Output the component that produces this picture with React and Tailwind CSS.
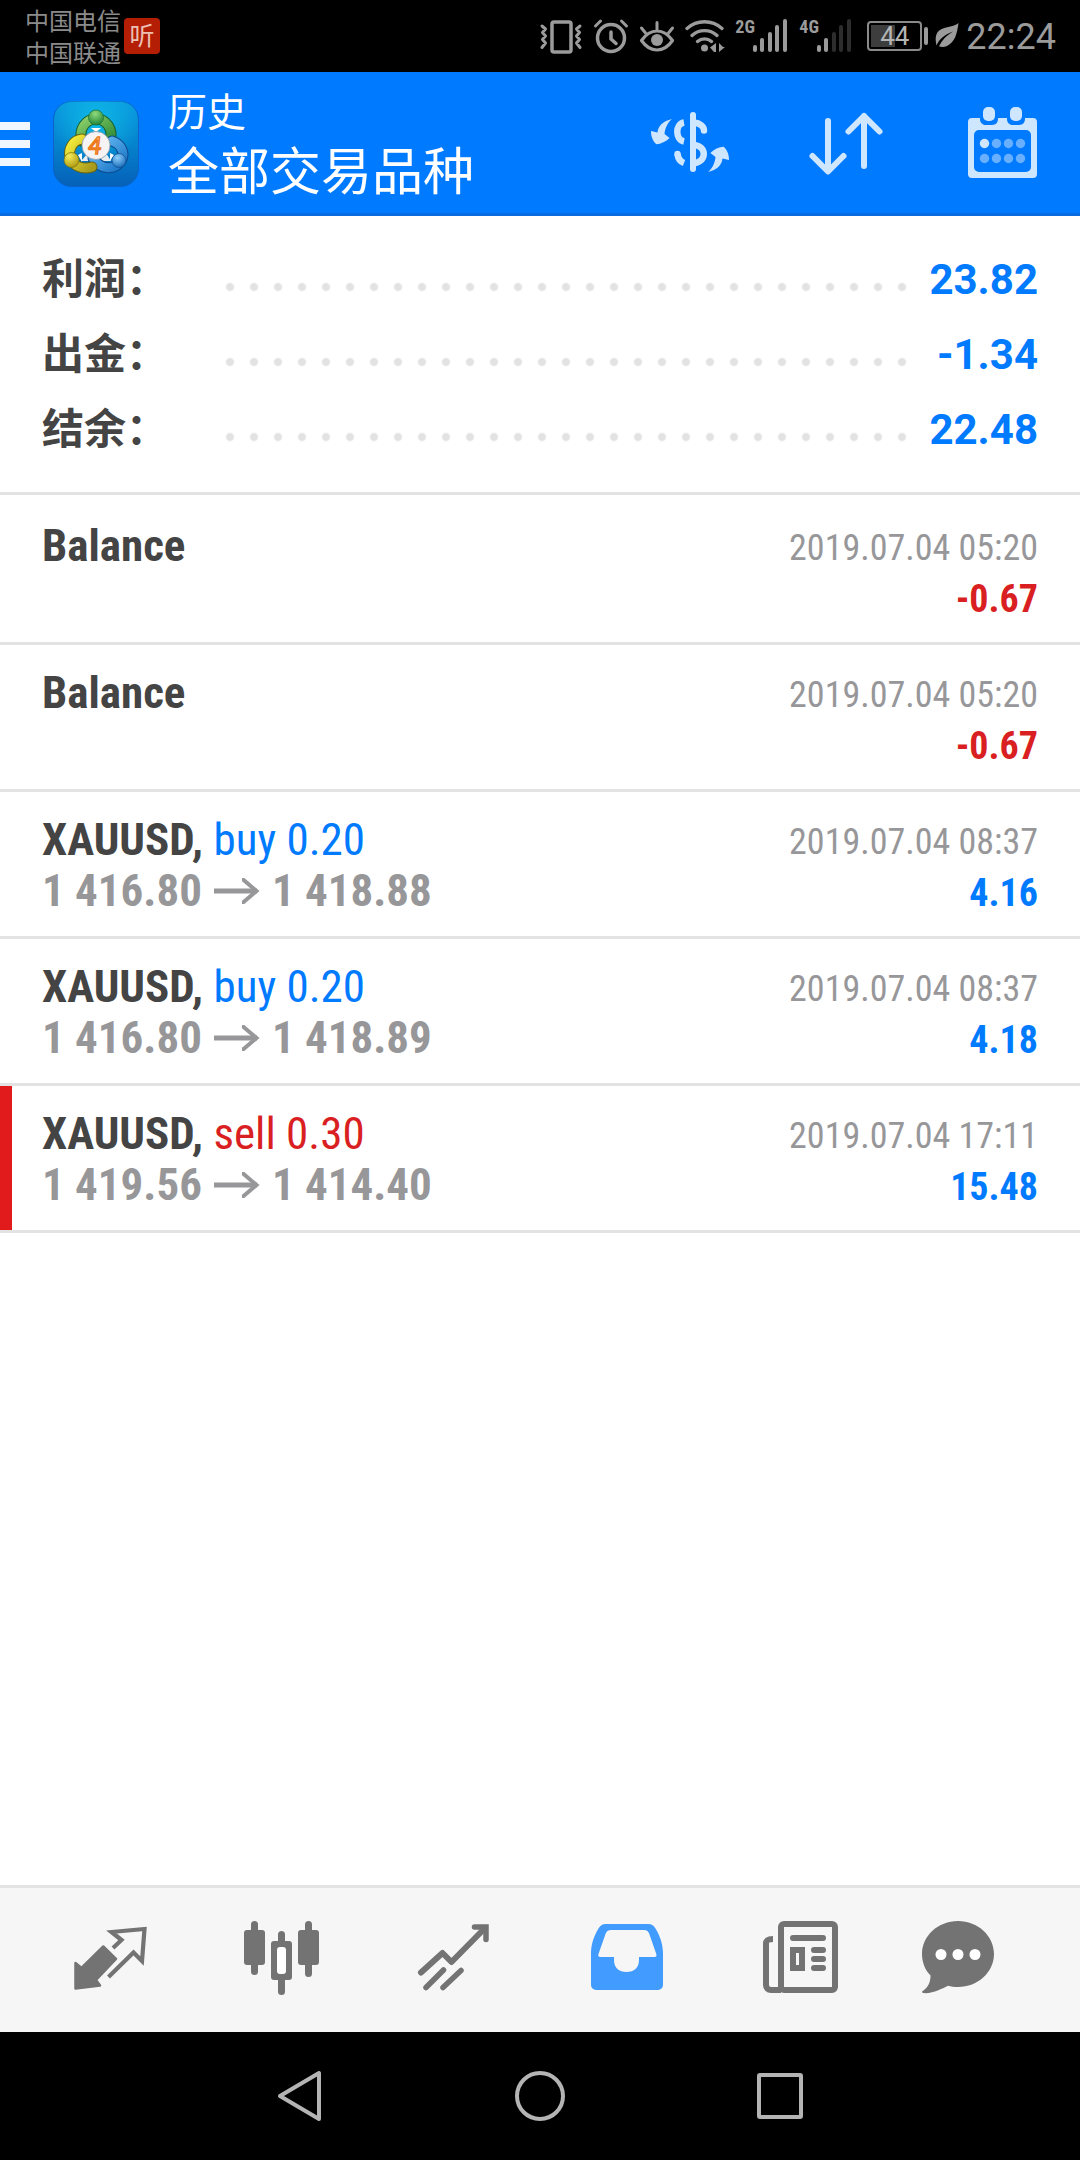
import React, { useState } from 'react'
import clsx from 'clsx'

const summary = [
  { label: '利润', value: '23.82' },
  { label: '出金', value: '-1.34' },
  { label: '结余', value: '22.48' },
]

const deals = [
  { id: 1, name: 'Balance', time: '2019.07.04 05:20', profit: '-0.67' },
  { id: 2, name: 'Balance', time: '2019.07.04 05:20', profit: '-0.67' },
  { id: 3, name: 'XAUUSD', side: 'buy', volume: '0.20', open: '1 416.80', close: '1 418.88', time: '2019.07.04 08:37', profit: '4.16' },
  { id: 4, name: 'XAUUSD', side: 'buy', volume: '0.20', open: '1 416.80', close: '1 418.89', time: '2019.07.04 08:37', profit: '4.18' },
  { id: 5, name: 'XAUUSD', side: 'sell', volume: '0.30', open: '1 419.56', close: '1 414.40', time: '2019.07.04 17:11', profit: '15.48', marked: true },
]

/* ---------- status bar ---------- */

const VibrateIcon = () => (
  <svg width="44" height="36" viewBox="0 0 44 36" fill="none" stroke="currentColor" strokeLinejoin="round" strokeLinecap="round">
    <rect x="13" y="4" width="19" height="30" rx="2" strokeWidth="3.5" />
    <path d="M3 8l3.500 3-3 3.500 3 3.500-3 3.500 3 3.500-3.500 4.500M41 8l-3.500 3 3 3.500-3 3.500 3 3.500-3 3.500 3.500 4.500" strokeWidth="3" />
  </svg>
)

const AlarmIcon = () => (
  <svg width="36" height="36" viewBox="0 0 36 36" fill="none" stroke="currentColor" strokeLinecap="round">
    <circle cx="18" cy="20" r="13.500" strokeWidth="3.500" />
    <path d="M18 14v7l5 4.500" strokeWidth="3.500" />
    <path d="M2.500 8l5-5M33.500 8l-5-5" strokeWidth="3" />
  </svg>
)

const EyeIcon = () => (
  <svg width="36" height="36" viewBox="0 0 36 36" fill="none" stroke="currentColor" strokeLinecap="round">
    <path d="M2.500 22.500C7 16 12 13 18 13s11 3 15.500 9.500C29 29 24 32 18 32S7 29 2.500 22.500z" strokeWidth="3.200" strokeLinejoin="round" />
    <circle cx="18" cy="22" r="6" fill="currentColor" stroke="none" />
    <path d="M18 4.500V11M2.500 10l4 5M33.500 10l-4 5" strokeWidth="3" />
  </svg>
)

const WifiIcon = () => (
  <svg width="40" height="36" viewBox="0 0 40 36" fill="none" stroke="currentColor" strokeLinecap="round">
    <path d="M2 10.500C12 1.500 27 1.500 37 10.500M7 17.500c7-6.500 18-6.500 25 0M12.500 23.500c4-3.500 10-3.500 14 0" strokeWidth="3.300" />
    <circle cx="19.500" cy="30" r="3.500" fill="currentColor" stroke="none" />
    <path d="M31 25v9h-2l-4-4.500zM34 25v9l6-5h-2z" fill="currentColor" stroke="none" />
  </svg>
)

const bars = [
  { x: 0, y: 27 },
  { x: 7, y: 20 },
  { x: 15, y: 14 },
  { x: 22, y: 7 },
  { x: 30, y: 1 },
]

const Signal = ({ type, level }) => (
  <div className="flex items-start">
    <span className="w-[18px] font-['Roboto_Condensed',Roboto,sans-serif] text-[18px] leading-[18px] font-bold">{type}</span>
    <svg width="36" height="36" viewBox="0 0 36 36">
      {bars.map((bar, i) => (
        <rect key={bar.x} x={bar.x} y={bar.y} width="4" height={34 - bar.y} rx="2" fill={i < level ? 'currentColor' : '#2d2d2d'} />
      ))}
    </svg>
  </div>
)

const LeafIcon = () => (
  <svg width="24" height="36" viewBox="0 0 24 36" fill="currentColor">
    <path d="M23.500 5C22 16 20 24 12 28c-3 1.300-6 1-8 .2C7 22 12 17 18 13.500 10 16.500 4 21 1.500 27.500-.5 19 1 13 8 10.500 14 8.500 19 8.500 23.500 5z" />
  </svg>
)

const StatusBar = () => (
  <div className="flex h-[72px] items-center justify-between bg-black pr-6 pl-[25px] text-[#9b9b9b]">
    <div className="flex items-center gap-[3px]">
      <div className="pt-[3px] text-[24px] leading-8 text-[#8b8b8b]">
        <p>中国电信</p>
        <p>中国联通</p>
      </div>
      <span className="flex size-9 items-center justify-center rounded bg-[#b31e04] text-[25px] leading-none text-[#ecc0b4]">听</span>
    </div>
    <div className="flex items-center gap-[10px]">
      <VibrateIcon />
      <AlarmIcon />
      <EyeIcon />
      <WifiIcon />
      <Signal type="2G" level={5} />
      <Signal type="4G" level={2} />
      <div className="ml-1 flex items-center gap-[7px]">
        <div className="flex items-center gap-[2px]">
          <div className="relative flex h-[30px] w-[55px] items-center justify-center rounded border-2 border-[#8a8a8a]">
            <span className="absolute inset-y-[2px] left-[2px] w-6 bg-[#3d3d3d]"></span>
            <span className="relative text-[26px] leading-none text-[#b4b4b4]">44</span>
          </div>
          <span className="h-[18px] w-[4px] rounded bg-[#9b9b9b]"></span>
        </div>
        <LeafIcon />
        <span className="pt-[2px] text-[36px] leading-none">22:24</span>
      </div>
    </div>
  </div>
)

/* ---------- header ---------- */

const AppLogo = () => (
  <svg width="86" height="86" viewBox="0 0 86 86">
    <defs>
      <linearGradient id="tile" x1="0" y1="0" x2="0" y2="1">
        <stop offset="0" stopColor="#0a9be0" />
        <stop offset="0.500" stopColor="#0583cc" />
        <stop offset="1" stopColor="#0560b8" />
      </linearGradient>
      <radialGradient id="glow" cx="0.500" cy="0.250" r="0.500">
        <stop offset="0" stopColor="#10c4ea" stopOpacity="0.800" />
        <stop offset="1" stopColor="#10c4ea" stopOpacity="0" />
      </radialGradient>
      <linearGradient id="greenRing" x1="0" y1="0" x2="1" y2="1">
        <stop offset="0" stopColor="#8ccf6a" />
        <stop offset="1" stopColor="#2c8a35" />
      </linearGradient>
      <linearGradient id="yellowRing" x1="0" y1="0" x2="1" y2="1">
        <stop offset="0" stopColor="#f7ee3a" />
        <stop offset="1" stopColor="#a89a1c" />
      </linearGradient>
      <linearGradient id="blueRing" x1="0" y1="0" x2="1" y2="1">
        <stop offset="0" stopColor="#6cc0f4" />
        <stop offset="1" stopColor="#1a74c8" />
      </linearGradient>
      <radialGradient id="green" cx="0.450" cy="0.250" r="0.800">
        <stop offset="0" stopColor="#8fdb7c" />
        <stop offset="1" stopColor="#1c7f33" />
      </radialGradient>
      <radialGradient id="yellow" cx="0.350" cy="0.250" r="0.850">
        <stop offset="0" stopColor="#f6ec5a" />
        <stop offset="1" stopColor="#a8930c" />
      </radialGradient>
      <radialGradient id="blue" cx="0.400" cy="0.300" r="0.800">
        <stop offset="0" stopColor="#8fd0fb" />
        <stop offset="1" stopColor="#0d62b4" />
      </radialGradient>
    </defs>
    <rect x="0.500" y="0.500" width="85" height="85" rx="18" fill="url(#tile)" stroke="#0a62c4" />
    <rect width="86" height="86" rx="18" fill="url(#glow)" />
    <path d="M35 52h18l5 8H28z" fill="#e8eef2" />
    <g fill="none" strokeLinecap="round">
      <path d="M29 40c-4-12 4-22 14-22s18 10 14 22" stroke="#155c2a" strokeWidth="11" />
      <path d="M29 40c-4-12 4-22 14-22s18 10 14 22" stroke="url(#greenRing)" strokeWidth="9" />
      <path d="M59 40c9 3 14 12 9 20-6 9-20 10-28-3" stroke="#0c4a8c" strokeWidth="11" />
      <path d="M59 40c9 3 14 12 9 20-6 9-20 10-28-3" stroke="url(#blueRing)" strokeWidth="9" />
      <path d="M29 38c-9 1-14 10-12 18 3 9 12 13 22 10" stroke="#67640f" strokeWidth="11" />
      <path d="M29 38c-9 1-14 10-12 18 3 9 12 13 22 10" stroke="url(#yellowRing)" strokeWidth="9" />
    </g>
    <path d="M25 54l4-2v9zM61 54l-4-2v8zM38 27h10l-5 4z" fill="#fff" />
    <circle cx="43" cy="16.500" r="7.500" fill="url(#green)" stroke="#17682c" strokeWidth="0.700" />
    <circle cx="18.500" cy="59" r="7.500" fill="url(#yellow)" stroke="#75700f" strokeWidth="0.700" />
    <circle cx="66" cy="59.500" r="7" fill="url(#blue)" stroke="#0c4a8c" strokeWidth="0.700" />
    <circle cx="43" cy="44.500" r="14" fill="#f5f3f4" stroke="#8c9aa6" strokeWidth="0.800" />
    <text x="42" y="53" textAnchor="middle" fontFamily="Lato, sans-serif" fontSize="24" fontStyle="italic" fill="#fbd9a6" stroke="#ee7a1c" strokeWidth="1.500">4</text>
  </svg>
)

const CurrencyIcon = () => (
  <svg width="84" height="84" viewBox="0 0 84 84" fill="none" stroke="currentColor" strokeWidth="6.500">
    <path d="M45 13v54" strokeWidth="6" strokeLinecap="round" />
    <path d="M36 20.500C27 22 27 37.500 36 39.500" />
    <path d="M46 20.500C52 21 56 24.500 56 28.500" strokeLinecap="round" />
    <path d="M46 43c13 1 13 17 0 18" />
    <path d="M29.500 52C30 56 32 59.500 36 61" />
    <circle cx="29.500" cy="52" r="3.200" fill="currentColor" stroke="none" />
    <g fill="currentColor" stroke="none">
      <path id="turn" d="M24 17C15 19 10 24 9.500 30.500L3 29c0 6 2 10 5.300 13.200C13 42 18 39.500 21.600 36L16.500 32C17 26 20 20 24 17z" />
      <use href="#turn" transform="rotate(180 42 43.500)" />
    </g>
  </svg>
)

const SortIcon = () => (
  <svg width="84" height="84" viewBox="0 0 84 84" fill="none" stroke="currentColor" strokeWidth="6" strokeLinecap="round" strokeLinejoin="round">
    <path d="M24 19v50M8.500 54L24 69.500 39.500 54" />
    <path d="M60 64V14M44.500 29.500L60 14l15.500 15.500" />
  </svg>
)

const CalendarIcon = () => (
  <svg width="84" height="84" viewBox="0 0 84 84" fill="currentColor">
    <path fillRule="evenodd" d="M12 16h8v1c0 4 3 6 6 6h6c4 0 6-3 6-6v-1h9v1c0 4 3 6 6 6h6c4 0 6-3 6-6v-1h8a4 4 0 014 4v52a4 4 0 01-4 4H12a4 4 0 01-4-4V20a4 4 0 014-4zM19 28a5 5 0 00-5 5v32a5 5 0 005 5h47a5 5 0 005-5V33a5 5 0 00-5-5z" />
    <rect x="23" y="5" width="12" height="14" rx="5" />
    <rect x="50" y="5" width="12" height="14" rx="5" />
    <circle cx="24.500" cy="41.500" r="4.700" />
    <g opacity="0.500">
      <circle cx="36.500" cy="41.500" r="4.700" />
      <circle cx="48.500" cy="41.500" r="4.700" />
      <circle cx="60.500" cy="41.500" r="4.700" />
      <circle cx="24.500" cy="56.500" r="4.700" />
      <circle cx="36.500" cy="56.500" r="4.700" />
      <circle cx="48.500" cy="56.500" r="4.700" />
      <circle cx="60.500" cy="56.500" r="4.700" />
    </g>
  </svg>
)

const actions = [
  { name: '交易品种', icon: CurrencyIcon },
  { name: '排序', icon: SortIcon },
  { name: '日期', icon: CalendarIcon },
]

const Header = () => (
  <header className="flex h-36 items-center justify-between border-b-[3px] border-[#0a6be0] bg-[#007aff] pt-[3px] text-white">
    <div className="flex items-center">
      <button type="button" aria-label="菜单" className="flex items-center gap-[23px]">
        <span className="flex flex-col gap-[10px]">
          <span className="h-2 w-[30px] bg-[#f0f7ff]"></span>
          <span className="h-2 w-[30px] bg-[#f0f7ff]"></span>
          <span className="h-2 w-[30px] bg-[#f0f7ff]"></span>
        </span>
        <AppLogo />
      </button>
      <div className="ml-[29px]">
        <p className="text-[39px] leading-[58px]">历史</p>
        <h1 className="text-[51px] leading-[62px]">全部交易品种</h1>
      </div>
    </div>
    <div className="flex text-[#cfe6ff]">
      {actions.map((action) => {
        const Icon = action.icon
        return (
          <button key={action.name} type="button" aria-label={action.name} className="flex w-[156px] items-center justify-center">
            <Icon />
          </button>
        )
      })}
    </div>
  </header>
)

/* ---------- history ---------- */

const Summary = () => (
  <dl className="border-b-[3px] border-[#e3e3e3] px-[42px] pt-[26px] pb-[25px] text-[42px] leading-[75px] font-bold">
    {summary.map((row) => (
      <div key={row.label} className="flex h-[75px] items-end">
        <dt className="w-44 text-[#444]">{row.label}：</dt>
        <dd aria-hidden="true" className="mb-[18px] h-6 flex-1 bg-[radial-gradient(circle,#e2e2e2_3px,transparent_5px)] bg-[length:24px_24px]"></dd>
        <dd className="w-[124px] text-right text-[#007aff]">{row.value}</dd>
      </div>
    ))}
  </dl>
)

const ArrowIcon = () => (
  <svg width="46" height="26" viewBox="0 0 46 26" fill="none" stroke="currentColor" strokeWidth="4">
    <path d="M0 13h43" strokeWidth="5" />
    <path d="M28 1.500h1L42.500 13 29 24.500h-1" />
  </svg>
)

const Deal = ({ deal }) => (
  <li className="border-b-[3px] border-[#e3e3e3]">
    <div
      className={clsx(
        "flex h-36 justify-between border-l-[12px] pr-[42px] pl-[30px] font-['Roboto_Condensed',Roboto,sans-serif]",
        deal.marked ? 'border-[#e11b1b]' : 'border-transparent'
      )}
    >
      <div className="pt-[22px] text-[45px] leading-[51px]">
        <p className="font-bold text-[#444]">
          {deal.name}
          {deal.side && (
            <>
              {', '}
              <span className={clsx('font-normal', deal.side === 'buy' ? 'text-[#007aff]' : 'text-[#d91f21]')}>
                {deal.side} {deal.volume}
              </span>
            </>
          )}
        </p>
        {deal.open && (
          <p className="flex items-center gap-3 font-bold text-[#97979a]">
            <span>{deal.open}</span>
            <ArrowIcon />
            <span>{deal.close}</span>
          </p>
        )}
      </div>
      <div className="pt-[25px] text-right leading-[51px]">
        <p className="text-[36px] text-[#97979a]">{deal.time}</p>
        <p className={clsx('text-[38px] font-bold', deal.profit.startsWith('-') ? 'text-[#d91f21]' : 'text-[#007aff]')}>{deal.profit}</p>
      </div>
    </div>
  </li>
)

/* ---------- bottom tabs ---------- */

const QuotesIcon = () => (
  <svg width="84" height="84" viewBox="0 0 84 84" fill="currentColor">
    <path d="M45 30l8.500-8L43.500 14 76.500 11 74 43 65.500 34.500 40.500 59" fill="none" stroke="currentColor" strokeWidth="4.200" />
    <path d="M35.300 28.500L48 41 28 62l4 5.500L7.500 70.500V45l6 5z" stroke="currentColor" strokeWidth="2.500" strokeLinejoin="round" />
  </svg>
)

const ChartIcon = () => (
  <svg width="84" height="84" viewBox="0 0 84 84" fill="currentColor">
    <rect x="4" y="12" width="21" height="35" rx="3" />
    <rect x="11" y="3" width="7" height="54" rx="3.500" />
    <rect x="58" y="12" width="21" height="35" rx="3" />
    <rect x="65" y="3" width="7" height="56" rx="3.500" />
    <rect x="38" y="13" width="7" height="64" rx="3.500" />
    <rect x="31" y="23" width="21" height="39" rx="3" />
    <rect x="37" y="29" width="9" height="27" rx="3" fill="#fff" />
  </svg>
)

const TradeIcon = () => (
  <svg width="84" height="84" viewBox="0 0 84 84" fill="none" stroke="currentColor" strokeWidth="5.500" strokeLinecap="round">
    <path d="M9 54.500L30.500 35l9 9L73 10" strokeWidth="6" strokeLinejoin="round" />
    <path d="M62.500 9H74v12.500" />
    <path d="M14 69.500L31.500 52M31 69.500L49 52.500" />
  </svg>
)

const HistoryIcon = () => (
  <svg width="84" height="84" viewBox="0 0 84 84" fill="currentColor">
    <path fillRule="evenodd" d="M22 6h42c4 0 6 2 7.500 4.500C76 18 79 26 79 36v31a5 5 0 01-5 5H12a5 5 0 01-5-5V36c0-10 3-18 7.500-25.500C16 8 18 6 22 6zM27 12c-3 0-4.500 1.500-5.500 4l-7 20c-.6 2 0 3 2 3H30v3c0 8 5 12 12.500 12S55 50 55 42v-3h15.500c2 0 2.300-1 1.800-3l-7-20c-1-2.500-2.300-4-5.300-4z" />
  </svg>
)

const NewsIcon = () => (
  <svg width="84" height="84" viewBox="0 0 84 84" fill="none" stroke="currentColor" strokeWidth="6">
    <rect x="25" y="6" width="54" height="66" rx="3" />
    <path d="M17 21c-5 0-7 1-7 5v41c0 3 2 5 5 5h10" />
    <path d="M37 20h30M58 32h9M58 41h9M58 50h9" strokeLinecap="round" />
    <rect x="37" y="32" width="9" height="18" />
  </svg>
)

const ChatIcon = () => (
  <svg width="84" height="84" viewBox="0 0 84 84" fill="currentColor">
    <path d="M42 3c20 0 36 15 36 33S62 69 42 69c-4 0-7-.3-10-1.200C25 71 17 76 7 75c-1.500-.3-1-2 .5-2.500 5-3.500 7-9 7-15C9 52 6 44 6 36 6 18 22 3 42 3z" />
    <g fill="#fff">
      <circle cx="25" cy="36.500" r="5.500" />
      <circle cx="42" cy="36.500" r="5.500" />
      <circle cx="59" cy="36.500" r="5.500" />
    </g>
  </svg>
)

const tabs = [
  { id: 'quotes', name: '行情', icon: QuotesIcon },
  { id: 'chart', name: '图表', icon: ChartIcon },
  { id: 'trade', name: '交易', icon: TradeIcon },
  { id: 'history', name: '历史', icon: HistoryIcon },
  { id: 'news', name: '新闻', icon: NewsIcon },
  { id: 'chat', name: '聊天', icon: ChatIcon },
]

const TabBar = () => {
  const [active, setActive] = useState('history')

  return (
    <nav className="grid h-[147px] grid-cols-[repeat(5,43fr)_37fr] border-t-[3px] border-[#e3e3e3] bg-[#f6f6f6] pr-12 pl-6">
      {tabs.map((tab) => {
        const Icon = tab.icon
        return (
          <button
            key={tab.id}
            type="button"
            aria-label={tab.name}
            onClick={() => setActive(tab.id)}
            className={clsx('flex items-center justify-center', active === tab.id ? 'text-[#429bff]' : 'text-[#737373]')}
          >
            <Icon />
          </button>
        )
      })}
    </nav>
  )
}

const SystemBar = () => (
  <div className="h-32 bg-black text-[#b4b4b4]">
    <div className="mx-auto grid h-full w-2/3 grid-cols-3 place-items-center">
      <button type="button" aria-label="返回">
        <svg width="52" height="52" viewBox="0 0 52 52" fill="none" stroke="currentColor" strokeWidth="4" strokeLinejoin="round">
          <path d="M45 3v46L6 26z" />
        </svg>
      </button>
      <button type="button" aria-label="主页">
        <svg width="52" height="52" viewBox="0 0 52 52" fill="none" stroke="currentColor" strokeWidth="4">
          <circle cx="26" cy="26" r="23" />
        </svg>
      </button>
      <button type="button" aria-label="最近任务">
        <svg width="52" height="52" viewBox="0 0 52 52" fill="none" stroke="currentColor" strokeWidth="4" strokeLinejoin="round">
          <rect x="5" y="5" width="42" height="42" rx="1" />
        </svg>
      </button>
    </div>
  </div>
)

const App = () => {
  return (
    <div className="flex min-h-screen flex-col bg-white font-[Roboto,'Noto_Sans_CJK_SC',sans-serif]">
      <StatusBar />
      <Header />
      <main className="flex-1">
        <Summary />
        <ul className="pt-[3px]">
          {deals.map((deal) => (
            <Deal key={deal.id} deal={deal} />
          ))}
        </ul>
      </main>
      <TabBar />
      <SystemBar />
    </div>
  )
}

export default App
